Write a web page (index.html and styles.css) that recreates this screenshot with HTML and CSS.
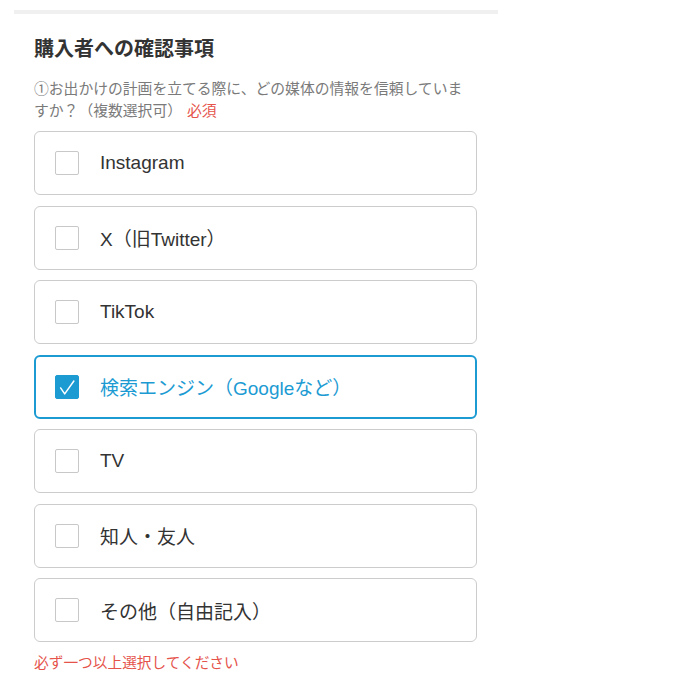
FILE: index.html
```html
<!DOCTYPE html>
<html>
<head>
    <meta charset="utf-8">
    <title>購入者への確認事項</title>
    <link rel="stylesheet" href="styles.css">
</head>
<body>

    <div class="form-section">
        <h2 class="section-title">購入者への確認事項</h2>
        <p class="question">①お出かけの計画を立てる際に、どの媒体の情報を信頼していますか？（複数選択可）<span class="required">必須</span></p>

        <div class="option-list">
            <label class="option">
                <input type="checkbox" name="media">
                <span class="box"></span>
                <span class="option-text">Instagram</span>
            </label>
            <label class="option">
                <input type="checkbox" name="media">
                <span class="box"></span>
                <span class="option-text">X（旧Twitter）</span>
            </label>
            <label class="option">
                <input type="checkbox" name="media">
                <span class="box"></span>
                <span class="option-text">TikTok</span>
            </label>
            <label class="option checked">
                <input type="checkbox" name="media" checked>
                <span class="box">
                    <svg viewBox="0 0 24 24" width="24" height="24"><path d="M5 13 L9.5 19.5 L19.5 5.5" fill="none" stroke="#fff" stroke-width="1.6" stroke-linecap="round" stroke-linejoin="round"/></svg>
                </span>
                <span class="option-text">検索エンジン（Googleなど）</span>
            </label>
            <label class="option">
                <input type="checkbox" name="media">
                <span class="box"></span>
                <span class="option-text">TV</span>
            </label>
            <label class="option">
                <input type="checkbox" name="media">
                <span class="box"></span>
                <span class="option-text">知人・友人</span>
            </label>
            <label class="option">
                <input type="checkbox" name="media">
                <span class="box"></span>
                <span class="option-text">その他（自由記入）</span>
            </label>
        </div>

        <p class="error">必ず一つ以上選択してください</p>
    </div>

</body>
</html>
```

FILE: styles.css
```css
body {
    font-family: "Liberation Sans", "Noto Sans CJK JP", sans-serif;
    margin: 0;
    padding: 0;
    background-color: #fff;
    color: #333;
}

.form-section {
    width: 484px;
    margin: 10px 0 0 14px;
    padding: 20px 21px 0 20px;
    box-sizing: border-box;
    border-top: 4px solid #f0f0f0;
}

.section-title {
    font-size: 20px;
    font-weight: bold;
    color: #333;
    margin: 0 0 14px;
    line-height: 30px;
}

.question {
    font-size: 14.8px;
    line-height: 22px;
    color: #7a7a7a;
    margin: 0 0 9px;
}

.required {
    color: #e5534b;
    margin-left: 5px;
}

.option-list {
    display: flex;
    flex-direction: column;
    gap: 10.5px;
}

.option {
    display: flex;
    align-items: center;
    height: 64px;
    box-sizing: border-box;
    border: 1px solid #ccc;
    border-radius: 6px;
    padding-left: 20px;
    cursor: pointer;
}

.option input {
    display: none;
}

.box {
    width: 24px;
    height: 24px;
    box-sizing: border-box;
    border: 1px solid #c8c8c8;
    border-radius: 2px;
    display: flex;
    align-items: center;
    justify-content: center;
    flex-shrink: 0;
}

.option-text {
    font-size: 19px;
    margin-left: 21px;
    color: #333;
}

.option.checked {
    border: 2px solid #1c9bd3;
    padding-left: 19px;
}

.option.checked .box {
    background-color: #1c9bd3;
    border-color: #1c9bd3;
}

.option.checked .option-text {
    color: #1c9bd3;
}

.error {
    font-size: 14.7px;
    color: #e5534b;
    margin: 9px 0 0;
}
```
